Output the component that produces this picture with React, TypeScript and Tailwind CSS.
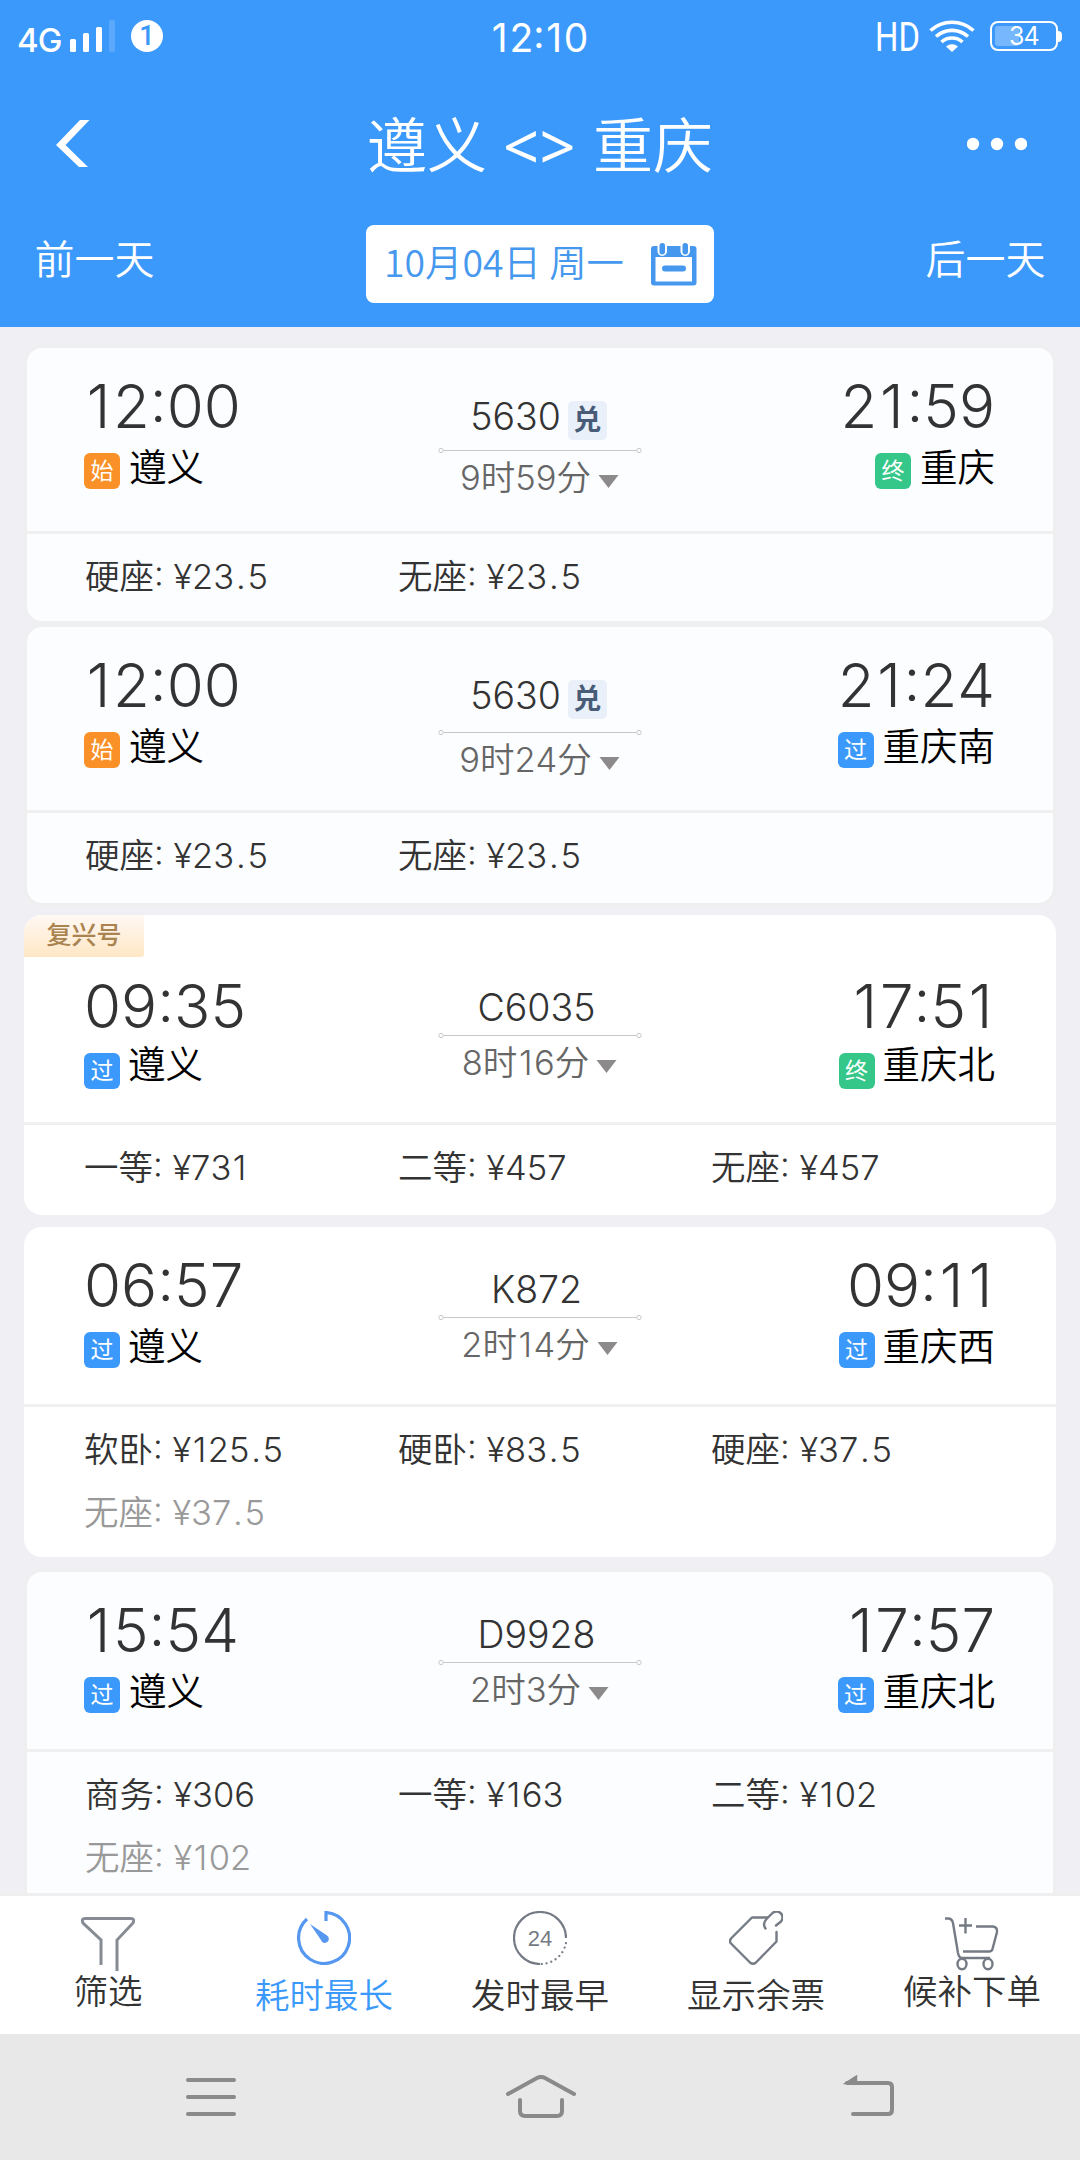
import type { ReactNode } from 'react';
import clsx from 'clsx';

type StopKind = '始' | '过' | '终';

interface Train {
  no: string;
  depart: string;
  arrive: string;
  from: string;
  fromKind: StopKind;
  to: string;
  toKind: StopKind;
  duration: string;
  redeem?: boolean;
  fuxing?: boolean;
  inactive?: boolean;
  seats: { name: string; price: string; soldOut?: boolean }[];
  layout: { card: string; top: string; side: string; middle: string; line: string };
}

const trains: Train[] = [
  {
    no: '5630', depart: '12:00', arrive: '21:59', from: '遵义', fromKind: '始', to: '重庆', toKind: '终',
    duration: '9时59分', redeem: true, inactive: true,
    seats: [{ name: '硬座', price: '23.5' }, { name: '无座', price: '23.5' }],
    layout: { card: 'mt-[18px] h-[279px]', top: 'h-[183px]', side: 'pt-[24px]', middle: 'pt-[46px]', line: 'mt-[6px]' },
  },
  {
    no: '5630', depart: '12:00', arrive: '21:24', from: '遵义', fromKind: '始', to: '重庆南', toKind: '过',
    duration: '9时24分', redeem: true, inactive: true,
    seats: [{ name: '硬座', price: '23.5' }, { name: '无座', price: '23.5' }],
    layout: { card: 'h-[282px]', top: 'h-[183px]', side: 'pt-[24px]', middle: 'pt-[46px]', line: 'mt-[9px]' },
  },
  {
    no: 'C6035', depart: '09:35', arrive: '17:51', from: '遵义', fromKind: '过', to: '重庆北', toKind: '终',
    duration: '8时16分', fuxing: true,
    seats: [{ name: '一等', price: '731' }, { name: '二等', price: '457' }, { name: '无座', price: '457' }],
    layout: { card: 'mt-[9px] h-[300px]', top: 'h-[165px]', side: 'pt-[15px]', middle: 'pt-[28px]', line: '' },
  },
  {
    no: 'K872', depart: '06:57', arrive: '09:11', from: '遵义', fromKind: '过', to: '重庆西', toKind: '过',
    duration: '2时14分',
    seats: [
      { name: '软卧', price: '125.5' },
      { name: '硬卧', price: '83.5' },
      { name: '硬座', price: '37.5' },
      { name: '无座', price: '37.5', soldOut: true },
    ],
    layout: { card: 'mt-[12px] h-[330px]', top: 'h-[177px]', side: 'pt-[24px]', middle: 'pt-[40px]', line: '' },
  },
  {
    no: 'D9928', depart: '15:54', arrive: '17:57', from: '遵义', fromKind: '过', to: '重庆北', toKind: '过',
    duration: '2时3分', inactive: true,
    seats: [
      { name: '商务', price: '306' },
      { name: '一等', price: '163' },
      { name: '二等', price: '102' },
      { name: '无座', price: '102', soldOut: true },
    ],
    layout: { card: 'mt-[12px] h-[345px]', top: 'h-[177px]', side: 'pt-[24px]', middle: 'pt-[40px]', line: '' },
  },
];

const kindColors: Record<StopKind, string> = {
  始: 'bg-[#fa9128]',
  过: 'bg-[#3b99fc]',
  终: 'bg-[#35c789]',
};

// Gives the narrow "1" and "." a bit more room, closer to tabular figures
function Digits({ value }: { value: string }) {
  return (
    <span className="[font-kerning:none]">
      {value.split(/([1.])/).map((part, i) => {
        if (part === '1') return <span key={i} className="px-[0.045em]">1</span>;
        if (part === '.') return <span key={i} className="px-[0.05em]">.</span>;
        return part;
      })}
    </span>
  );
}

function StatusBar() {
  return (
    <div className="flex h-[72px] items-start pl-[17px] pt-[20px] text-white">
      <span className="mt-[2px] w-[44px] text-[33px] font-medium leading-[36px] tracking-[-0.8px]">4G</span>
      <svg className="ml-[9px] h-[32px] w-[46px] shrink-0" viewBox="0 0 46 32" fill="currentColor">
        <rect x="0" y="19" width="6" height="13" rx="1.5" />
        <rect x="13" y="13" width="6" height="19" rx="1.5" />
        <rect x="26" y="7" width="6" height="25" rx="1.5" />
        <rect x="39" y="0" width="6" height="32" rx="1.5" opacity="0.16" />
      </svg>
      <span className="ml-[15px] flex h-8 w-8 shrink-0 items-center justify-center rounded-full bg-white font-['Roboto'] text-[27px] font-medium leading-none text-[#3b99fc]">
        1
      </span>
      <span className="ml-[327px] w-[111px] shrink-0 text-[39px] leading-[36px]">
        <Digits value="12:10" />
      </span>
      <span className="ml-[274px] w-[43px] shrink-0 origin-left scale-x-[0.82] font-['Roboto'] text-[40px] font-[450] leading-[35px]">HD</span>
      <svg className="ml-[11px] h-[32px] w-[46px] shrink-0" viewBox="0 0 46 32" fill="none" stroke="currentColor" strokeWidth="3.6">
        <path d="M1.5 10.5a32 32 0 0 1 43 0" />
        <path d="M7 16.5a24 24 0 0 1 32 0" />
        <path d="M12.5 22a16 16 0 0 1 21 0" />
        <path d="M17 26.5a9.5 9.5 0 0 1 12 0L23 32z" fill="currentColor" stroke="none" />
      </svg>
      <div className="ml-[15px] mt-px flex shrink-0 items-center">
        <div className="flex h-[30px] w-[68px] items-center rounded-[8px] border-2 border-white pl-[3px]">
          <div className="h-5 w-[24px] rounded-[3px] bg-white/30" />
          <span className="-ml-[10px] text-[25px] leading-[26px] tracking-[-1px]">34</span>
        </div>
        <div className="h-[11px] w-[4px] rounded-r-full bg-white" />
      </div>
    </div>
  );
}

function CalendarIcon() {
  return (
    <svg className="h-[43px] w-[46px] shrink-0" viewBox="0 0 46 43">
      <rect x="0" y="3" width="45.5" height="39.5" rx="3" fill="#4598ee" />
      <rect x="4.5" y="14" width="36.5" height="24.5" fill="#fff" />
      <rect x="11" y="22.5" width="24" height="6" rx="3" fill="#4598ee" />
      <rect x="6.5" y="-2" width="9.5" height="15" rx="4.7" fill="#fff" />
      <rect x="8.5" y="0" width="5.5" height="11.5" rx="2.7" fill="#4598ee" />
      <rect x="29.5" y="-2" width="9.5" height="15" rx="4.7" fill="#fff" />
      <rect x="31.5" y="0" width="5.5" height="11.5" rx="2.7" fill="#4598ee" />
    </svg>
  );
}

function Header() {
  return (
    <header className="h-[327px] bg-[#3b99fc] text-white">
      <StatusBar />
      <div className="flex h-[147px] items-center justify-between pl-[56px] pr-[53px]">
        <svg className="mb-[4px] h-[48px] w-[34px]" viewBox="0 0 34 48" fill="currentColor">
          <path d="M24 0H33.5L9.5 25 32 47H23L0 25z" />
        </svg>
        <h1 className="flex items-center pl-[23px] text-[60px] font-[350] leading-[80px]">
          遵义
          <span className="ml-[16px] mr-[17px] font-['Noto_Sans'] text-[63px] font-normal tracking-[0.5px]">&lt;&gt;</span>
          重庆
        </h1>
        <svg className="mb-[3px] h-[14px] w-[60px]" viewBox="0 0 60 14" fill="currentColor">
          <circle cx="6" cy="7" r="6.2" />
          <circle cx="30" cy="7" r="6.2" />
          <circle cx="54" cy="7" r="6.2" />
        </svg>
      </div>
      <div className="flex items-start justify-between px-[34px] pt-[6px]">
        <button className="mt-[5px] w-[121px] text-[40px] font-[350] leading-[60px]">前一天</button>
        <button className="flex h-[78px] w-[348px] items-center justify-between rounded-[8px] bg-white pl-[18px] pr-[17px] text-[37.4px] text-[#4598ee]">
          <span className="whitespace-nowrap pb-[5px] font-['Noto_Sans_CJK_SC'] font-[350]">10月04日 周一</span>
          <CalendarIcon />
        </button>
        <button className="mt-[5px] w-[121px] text-[40px] font-[350] leading-[60px]">后一天</button>
      </div>
    </header>
  );
}

function KindBadge({ kind }: { kind: StopKind }) {
  return (
    <span
      className={clsx(
        'mt-[9px] flex h-9 w-9 items-center justify-center rounded-[6px] text-[23px] leading-none text-white',
        kindColors[kind]
      )}
    >
      {kind}
    </span>
  );
}

interface StopProps {
  time: string;
  name: string;
  kind: StopKind;
  raised?: boolean;
  inactive?: boolean;
  right?: boolean;
}

function Stop({ time, name, kind, raised, inactive, right }: StopProps) {
  return (
    <div className={clsx('flex w-[300px] flex-col', right && 'items-end')}>
      <span className="h-[72px] text-[60px] font-light leading-[68px] text-[#333]">
        <Digits value={time} />
      </span>
      <div className={clsx('flex items-start', right && 'justify-end', inactive ? 'gap-[9px]' : 'gap-[8px]')}>
        <KindBadge kind={kind} />
        <span className={clsx('text-[37.5px] font-[350] leading-[26px] text-black', raised ? 'pt-[8px]' : 'pt-[11px]')}>
          {name}
        </span>
      </div>
    </div>
  );
}

function RouteLine({ className }: { className: string }) {
  return (
    <svg className={clsx('h-[7px] w-[204px] shrink-0', className)} viewBox="0 0 204 7" fill="none" stroke="#c8c8c8">
      <circle cx="3" cy="3.5" r="2.2" />
      <path d="M5.5 3.5H198.5" />
      <circle cx="201" cy="3.5" r="2.2" />
    </svg>
  );
}

function TrainCard({ train }: { train: Train }) {
  const { layout } = train;
  return (
    <section
      className={clsx(
        'overflow-hidden rounded-[18px]',
        layout.card,
        train.inactive ? 'border-[3px] border-[#efefef] bg-[#fcfdff]' : 'bg-white px-[3px]'
      )}
    >
      {train.fuxing && (
        <div className="-ml-[3px] flex h-[42px] w-[120px] items-center justify-center rounded-br-[3px] bg-linear-to-b from-[#fff8f4] to-[#ffe7c5] text-[25px] font-medium text-[#a98350]">
          复兴号
        </div>
      )}
      <div className={clsx('flex justify-between pl-[57px] pr-[58px]', layout.top)}>
        <div className={layout.side}>
          <Stop time={train.depart} name={train.from} kind={train.fromKind} raised={train.fuxing} inactive={train.inactive} />
        </div>
        <div className={clsx('flex w-[204px] flex-col items-center', layout.middle)}>
          <div className="flex h-[47px] items-center pb-[2px] text-[37.5px] font-light leading-[45px] text-[#333] [font-kerning:none]">
            <span className={clsx(train.redeem ? '-ml-[2px]' : 'mr-[6px]')}>{train.no}</span>
            {train.redeem && (
              <span className="ml-[7px] mt-[7px] flex h-[39px] w-[39px] items-center justify-center rounded-[5px] bg-[#eaf0f9] text-[28px] font-bold text-[#485c78]">
                兑
              </span>
            )}
          </div>
          <RouteLine className={layout.line} />
          <div className="flex h-[47px] items-center gap-[7px] text-[34.5px] font-[350] leading-[47px] text-[#666]">
            <Digits value={train.duration} />
            <svg className="mt-[8px] h-[13px] w-[21px]" viewBox="0 0 21 13">
              <path d="M0.5 0H20.5L10.5 13z" fill="#8c8a8a" />
            </svg>
          </div>
        </div>
        <div className={layout.side}>
          <Stop time={train.arrive} name={train.to} kind={train.toKind} raised={train.fuxing} inactive={train.inactive} right />
        </div>
      </div>
      <div className="-mx-[3px] h-[3px] bg-[#f0f0f0]" />
      <div
        className={clsx(
          'grid pt-[11px] text-[34.5px] font-[350] leading-[63px] text-[#333]',
          train.inactive ? 'grid-cols-[313px_313px_auto] pl-[58px]' : 'grid-cols-[314px_313px_auto] pl-[57px]'
        )}
      >
        {train.seats.map(seat => (
          <span key={seat.name} className={clsx(seat.soldOut && 'text-[#999]')}>
            {seat.name}: ¥<Digits value={seat.price} />
          </span>
        ))}
      </div>
    </section>
  );
}

const FunnelIcon = () => (
  <svg className="h-[54px] w-[54px]" viewBox="0 0 54 54" fill="none" stroke="#868b94" strokeWidth="3">
    <path d="M20 48V23L2 6Q0 1.5 4 1.5H50Q54 1.5 52 6L36 23V54" />
  </svg>
);

const TimerIcon = () => (
  <svg className="h-[54px] w-[54px]" viewBox="0 0 54 54">
    <path d="M29 10V1.5A25.5 25.5 0 1 1 10 8" fill="none" stroke="#5697f0" strokeWidth="3.2" />
    <path d="M13 13L30 24.5A4 4 0 1 1 24 29z" fill="#5697f0" />
  </svg>
);

const ClockIcon = () => (
  <svg className="h-[54px] w-[54px]" viewBox="0 0 54 54" fill="none" stroke="#757b84" strokeWidth="2.2">
    <path d="M27 53A26 26 0 1 1 53 27" />
    <path d="M53 32A26 26 0 0 1 27 53" strokeDasharray="0.1 4.8" strokeLinecap="round" />
    <text x="27" y="35" textAnchor="middle" fontSize="22" fontFamily="Liberation Sans" fill="#757b84" stroke="none">24</text>
  </svg>
);

const TagIcon = () => (
  <svg className="h-[54px] w-[54px]" viewBox="0 0 54 54" fill="none" stroke="#757b84" strokeWidth="2.4" strokeLinecap="round" strokeLinejoin="round">
    <path d="M38 6.5H23L2 27.5Q0 30 2 32.5L21 51.5Q24 54 27 51.5L47.5 30.5V21" />
    <path d="M36.5 17.5Q33 12.5 38 7.5L43 2.5A6 6 0 0 1 52 10.5L47 14.5" />
  </svg>
);

const CartIcon = () => (
  <svg className="h-[54px] w-[54px]" viewBox="0 0 54 54" fill="none" stroke="#757b84" strokeWidth="2.4">
    <path d="M0 1.5H3Q7 1.5 8 6L13 36Q14 41 17 41H45" />
    <path d="M20.5 1V16.5M14 8.5H27" />
    <path d="M31 9.5H48Q52.5 10 52 15L47.5 32Q47 34.5 44 34.5H18" />
    <ellipse cx="17" cy="47" rx="4.5" ry="5.2" />
    <ellipse cx="43" cy="47" rx="4.5" ry="5.2" />
  </svg>
);

const tabs: { label: string; icon: ReactNode; pad: string; gap: string; active?: boolean }[] = [
  { label: '筛选', icon: <FunnelIcon />, pad: 'pt-[21px]', gap: '-mt-[2px]' },
  { label: '耗时最长', icon: <TimerIcon />, pad: 'pt-[15px]', gap: 'mt-[8px]', active: true },
  { label: '发时最早', icon: <ClockIcon />, pad: 'pt-[15px]', gap: 'mt-[8px]' },
  { label: '显示余票', icon: <TagIcon />, pad: 'pt-[15px]', gap: 'mt-[8px]' },
  { label: '候补下单', icon: <CartIcon />, pad: 'pt-[21px]', gap: '-mt-[2px]' },
];

function TabBar() {
  return (
    <nav className="flex h-[138px] bg-white">
      {tabs.map(tab => (
        <button key={tab.label} className={clsx('flex w-[216px] flex-col items-center', tab.pad)}>
          {tab.icon}
          <span
            className={clsx('text-[34.5px] font-[350] leading-[46px]', tab.gap, tab.active ? 'text-[#3b99fc]' : 'text-[#333]')}
          >
            {tab.label}
          </span>
        </button>
      ))}
    </nav>
  );
}

function SystemNav() {
  return (
    <div className="flex h-[126px] items-start bg-[#e8e8e8] pl-[186px] pt-[41px] text-[#8a8a8a]">
      <svg className="h-[44px] w-[50px]" viewBox="0 0 50 44" fill="none" stroke="currentColor" strokeWidth="4" strokeLinecap="round">
        <path d="M2 5H48M2 22H48M2 39H48" />
      </svg>
      <svg className="ml-[270px] h-[44px] w-[70px]" viewBox="0 0 70 44" fill="none" stroke="currentColor" strokeWidth="4" strokeLinecap="round">
        <path d="M2 19L31 3Q35 1 39 3L68 19" />
        <path d="M14 25V36Q14 41 19 41H51Q56 41 56 36V25" />
      </svg>
      <svg className="ml-[267px] h-[44px] w-[52px]" viewBox="0 0 52 44" fill="none" stroke="currentColor" strokeWidth="4" strokeLinecap="round">
        <path d="M4 8H45Q49 8 49 12V35Q49 39 45 39H10" />
        <path d="M2 8.5L13.5 1V8.5z" fill="currentColor" strokeWidth="1.5" />
      </svg>
    </div>
  );
}

export default function App() {
  return (
    <div className="flex h-[2160px] w-[1080px] flex-col overflow-hidden bg-[#efeff4] font-['Inter','Noto_Sans_CJK_SC',sans-serif]">
      <Header />
      <main className="h-[1569px] overflow-hidden border-b-[3px] border-[#efefef] px-[24px]">
        {trains.map((train, i) => (
          <TrainCard key={i} train={train} />
        ))}
      </main>
      <TabBar />
      <SystemNav />
    </div>
  );
}
